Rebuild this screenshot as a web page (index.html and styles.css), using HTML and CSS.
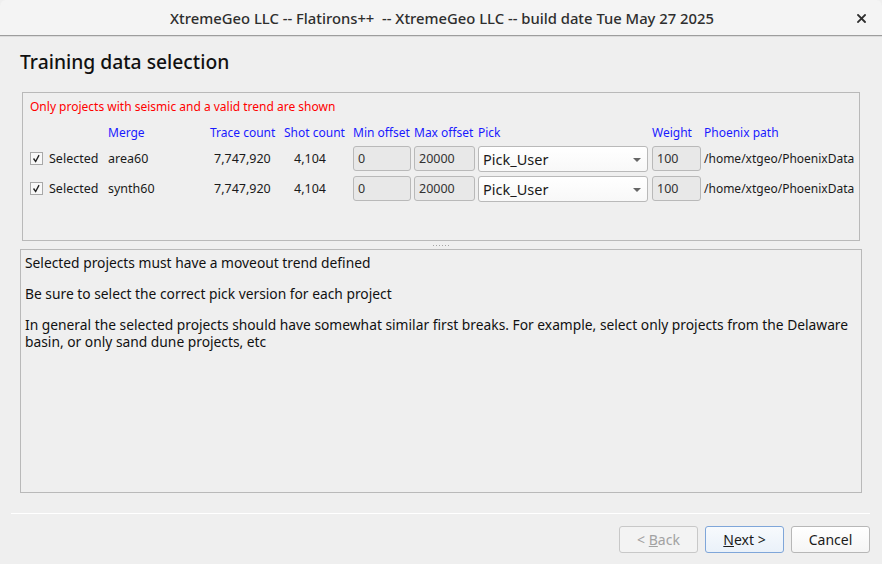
FILE: index.html
```html
<!DOCTYPE html>
<html>
<head>
	<meta charset="utf-8">
	<title>Training data selection</title>
	<link rel="stylesheet" href="styles.css">
</head>
<body>

	<div class="titlebar">
		<span class="title">XtremeGeo LLC -- Flatirons++ &nbsp;-- XtremeGeo LLC -- build date Tue May 27 2025</span>
		<svg class="close" width="9" height="9" viewBox="0 0 9 9">
			<path d="M1 1 L8 8 M8 1 L1 8" stroke="#2e2e2e" stroke-width="1.8" stroke-linecap="square"/>
		</svg>
	</div>

	<div class="wizard">
		<h1 class="heading">Training data selection</h1>

		<div class="group">
			<div class="note">Only projects with seismic and a valid trend are shown</div>

			<div class="grid">
				<!-- header -->
				<div></div>
				<div class="hd">Merge</div>
				<div class="hd">Trace count</div>
				<div class="hd">Shot count</div>
				<div class="hd">Min offset</div>
				<div class="hd">Max offset</div>
				<div class="hd">Pick</div>
				<div class="hd">Weight</div>
				<div class="hd">Phoenix path</div>

				<!-- row 1 -->
				<label class="sel">
					<svg class="check" width="13" height="13" viewBox="0 0 13 13">
						<path d="M3 6.5 L5.5 10 L9.5 2.5" fill="none" stroke="#222" stroke-width="1.6"/>
					</svg>Selected</label>
				<div class="cell">area60</div>
				<div class="cell trace">7,747,920</div>
				<div class="cell shot">4,104</div>
				<div class="field">0</div>
				<div class="field">20000</div>
				<div class="combo">Pick_User<span class="arrow"></span></div>
				<div class="field">100</div>
				<div class="cell path">/home/xtgeo/PhoenixData</div>

				<!-- row 2 -->
				<label class="sel">
					<svg class="check" width="13" height="13" viewBox="0 0 13 13">
						<path d="M3 6.5 L5.5 10 L9.5 2.5" fill="none" stroke="#222" stroke-width="1.6"/>
					</svg>Selected</label>
				<div class="cell">synth60</div>
				<div class="cell trace">7,747,920</div>
				<div class="cell shot">4,104</div>
				<div class="field">0</div>
				<div class="field">20000</div>
				<div class="combo">Pick_User<span class="arrow"></span></div>
				<div class="field">100</div>
				<div class="cell path">/home/xtgeo/PhoenixData</div>
			</div>
		</div>

		<div class="splitter"><span class="dots"></span></div>

		<div class="info">
			<p>Selected projects must have a moveout trend defined</p>
			<p>Be sure to select the correct pick version for each project</p>
			<p>In general the selected projects should have somewhat similar first breaks. For example, select only projects from the Delaware basin, or only sand dune projects, etc</p>
		</div>
	</div>

	<div class="footer">
		<button class="btn" disabled>&lt; <u>B</u>ack</button>
		<button class="btn default"><u>N</u>ext &gt;</button>
		<button class="btn">Cancel</button>
	</div>

</body>
</html>
```

FILE: styles.css
```css
* {
	padding: 0;
	margin: 0;
	box-sizing: border-box;
}
html, body {
	height: 100%;
}
body {
	background: #efefef;
	font-family: "Noto Sans", "DejaVu Sans", sans-serif;
	color: #1a1a1a;
	overflow: hidden;
}

/* window title */
.titlebar {
	position: relative;
	height: 36px;
	display: flex;
	align-items: center;
	justify-content: center;
	background: #f4f4f4;
	border-bottom: 1px solid #9d9d9d;
	box-shadow: 0 1px 0 #dcdcdc;
	border-radius: 6px 6px 0 0;
}
.title {
	font-size: 14.8px;
	font-weight: 500;
	color: #2e2e2e;
	padding-left: 2px;
}
.close {
	position: absolute;
	right: 16px;
	top: 14px;
}

.wizard {
	padding: 0 20px 0 20px;
}
.heading {
	font-size: 19.3px;
	font-weight: 500;
	line-height: 24px;
	margin-top: 14px;
	margin-bottom: 18px;
	color: #111;
}

/* projects box */
.group {
	margin: 0 2px;
	height: 149px;
	border: 1px solid #b9b9b9;
	padding: 6px 7px 0 7px;
}
.note {
	color: #ff0000;
	font-size: 12px;
	line-height: 16px;
	margin-bottom: 10px;
}
.grid {
	display: grid;
	grid-template-columns: 75px 99px 71px 66px 58px 61px 171px 49px auto;
	grid-template-rows: 16px 25px 25px;
	column-gap: 3px;
	row-gap: 5px;
	font-size: 12.5px;
	align-items: center;
}
.hd {
	color: #1a1aff;
	font-size: 12px;
	line-height: 16px;
	white-space: nowrap;
}
.cell {
	white-space: nowrap;
}
.path {
	font-size: 12px;
}
.trace {
	padding-left: 4px;
}
.shot {
	padding-left: 10px;
}
.sel {
	display: flex;
	align-items: center;
	white-space: nowrap;
}
.check {
	flex: none;
	border: 1px solid #a8a8a8;
	background: #f8f8f8;
	margin-right: 6px;
}
.field {
	height: 25px;
	border: 1px solid #b9b9b9;
	border-radius: 3px;
	background: #e8e8e8;
	padding-left: 4px;
	line-height: 23px;
	color: #333;
}
.combo {
	position: relative;
	width: 170px;
	height: 26px;
	border: 1px solid #b9b9b9;
	border-radius: 3px;
	background: linear-gradient(#ffffff, #f8f8f8);
	padding-left: 4px;
	line-height: 24px;
	font-size: 14.5px;
}
.arrow {
	position: absolute;
	right: 6px;
	top: 11px;
	border-left: 4px solid transparent;
	border-right: 4px solid transparent;
	border-top: 4px solid #666;
}

/* splitter between boxes */
.splitter {
	height: 8px;
	display: flex;
	justify-content: center;
	align-items: center;
}
.dots {
	width: 17px;
	height: 1px;
	background: repeating-linear-gradient(90deg, #a5a5a5 0 1px, transparent 1px 3px);
}

/* help text */
.info {
	height: 244px;
	border: 1px solid #b9b9b9;
	padding: 4px 0 4px 4px;
	font-size: 13.8px;
	line-height: 17px;
	color: #111;
}
.info p {
	margin-bottom: 14px;
}

/* buttons */
.footer {
	margin: 20px 12px 0 11px;
	border-top: 1px solid #ffffff;
	padding-top: 12px;
	display: flex;
	justify-content: flex-end;
	gap: 7px;
}
.btn {
	width: 79px;
	height: 27px;
	border: 1px solid #b7b7b7;
	border-radius: 3px;
	background: linear-gradient(#ffffff, #f5f5f5);
	font-family: "Noto Sans", "DejaVu Sans", sans-serif;
	font-size: 14px;
	color: #1a1a1a;
}
.btn[disabled] {
	color: #a2a2a2;
	border-color: #c8c8c8;
	background: #f3f3f3;
}
.btn.default {
	border-color: #7fa6d9;
	background: linear-gradient(#f7fafd, #eaf1f9);
}
```
